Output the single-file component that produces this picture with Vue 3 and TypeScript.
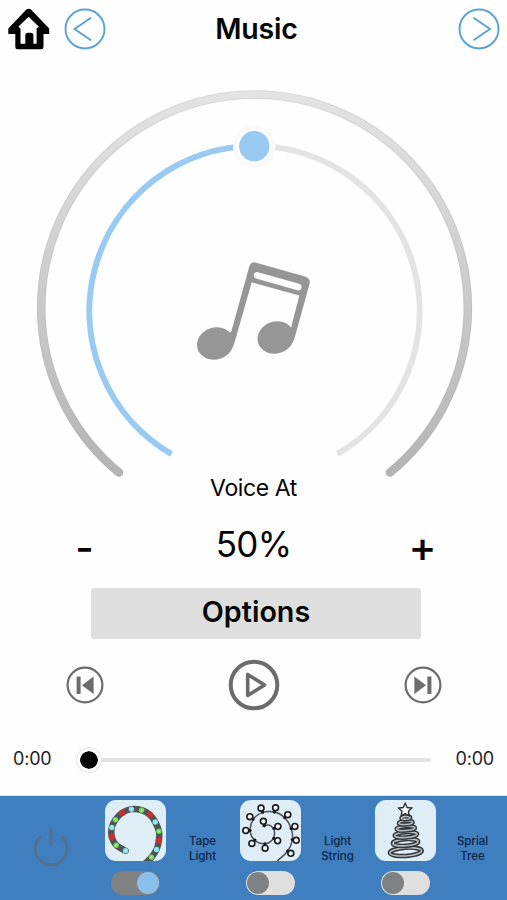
<script setup lang="ts">
import { ref } from 'vue'

type Point = [number, number]

interface Device {
  id: string
  label: [string, string]
  on: boolean
}

const volume = ref(50)
const devices = ref<Device[]>([
  { id: 'tape', label: ['Tape', 'Light'], on: true },
  { id: 'string', label: ['Light', 'String'], on: false },
  { id: 'tree', label: ['Sprial', 'Tree'], on: false },
])

function change(step: number): void {
  volume.value = Math.min(100, Math.max(0, volume.value + step))
}

/** Smooth curve through a list of points (Catmull-Rom to Bezier). */
function smooth(points: Point[]): string {
  let d = `M${points[0][0]} ${points[0][1]}`
  for (let i = 0; i < points.length - 1; i++) {
    const a = points[Math.max(0, i - 1)]
    const b = points[i]
    const c = points[i + 1]
    const e = points[Math.min(points.length - 1, i + 2)]
    d += `C${b[0] + (c[0] - a[0]) / 6} ${b[1] + (c[1] - a[1]) / 6} ${c[0] - (e[0] - b[0]) / 6} ${c[1] - (e[1] - b[1]) / 6} ${c[0]} ${c[1]}`
  }
  return d
}

const tapePoints: Point[] = [
  [20.3, 50], [11, 44.4], [6.7, 36.4], [6.7, 27], [10.3, 19.4], [16.7, 12.7], [26, 9],
  [36, 10], [44, 14.4], [49.4, 21.7], [53, 30.7], [53, 39.7], [50.7, 48.7], [45.7, 56.4], [39, 63],
]
const tapeColors = ['#7fe0ee', '#6fd84c', '#c8302c']
const tapeLights = tapePoints.slice(0, 14).map((p, i) => {
  const k = i < 7 ? i % 3 : [1, 2, 0][(i - 7) % 3]
  return { x: p[0], y: p[1], color: tapeColors[k], red: k === 2 }
})
const tapePath = smooth(tapePoints)

const wirePath = smooth([
  [22, 26], [28, 24.6], [32.5, 27.5], [34, 33], [32, 39], [24.7, 43], [14.7, 39.7], [10, 30.4], [13, 19], [22, 12.4],
  [34.7, 12], [44, 17.4], [50.4, 28], [51.4, 39.7], [46.7, 50.4], [36.7, 60],
])
const bulbs: { at: Point; base: Point }[] = [
  { at: [23, 21], base: [24, 25.5] },
  { at: [37.3, 26], base: [33.2, 28] },
  { at: [37, 40], base: [33, 37.6] },
  { at: [24.7, 47.4], base: [24.5, 43] },
  { at: [11.7, 42.7], base: [14.6, 39.3] },
  { at: [5.7, 30], base: [10, 30] },
  { at: [9.7, 16.4], base: [13, 19] },
  { at: [20.7, 8], base: [22.3, 12.2] },
  { at: [35, 7.7], base: [33.6, 12] },
  { at: [47, 14.4], base: [43.8, 17.5] },
  { at: [54, 26], base: [50, 28] },
  { at: [55.3, 39.7], base: [51.2, 39] },
  { at: [50, 52.4], base: [46.8, 50] },
]

const coils = [
  { x: 30.3, y: 51, rx: 15.7, ry: 4 },
  { x: 30, y: 41.8, rx: 12.5, ry: 3.2 },
  { x: 30.3, y: 34.3, rx: 11, ry: 2.6 },
  { x: 30.3, y: 28, rx: 9, ry: 2.1 },
  { x: 30.3, y: 22.4, rx: 6.8, ry: 1.7 },
  { x: 30.3, y: 17.6, rx: 4.3, ry: 1.3 },
]
</script>

<template>
  <main class="screen">
    <header class="top">
      <button class="plain home" aria-label="Home">
        <svg width="44" height="42" viewBox="7 7.500 44 42">
          <path d="M26.400 9.100Q28.700 7.200 31 9.100L49.200 28V33.500H43.500V46.500Q43.500 48.800 41.200 48.800H17.600Q15.300 48.800 15.300 46.500V33.500H8.300V28z" />
          <path d="M28.600 16.300 18.300 26.300 20.500 28V43.200H25.300V35Q25.300 32.300 28 32.300H30.700Q33.400 32.300 33.400 35V43.200H36.600V28L38.900 26.300z" fill="#fff" />
        </svg>
      </button>
      <button class="plain back" aria-label="Back">
        <svg width="42" height="42" viewBox="0 0 42 42">
          <circle cx="21" cy="21" r="19.500" class="ring" />
          <path d="M27 9.700 10.500 21 27 32.300" class="ring" />
        </svg>
      </button>
      <h1>Music</h1>
      <button class="plain next" aria-label="Next">
        <svg width="42" height="42" viewBox="0 0 42 42">
          <circle cx="21" cy="21" r="19.500" class="ring" />
          <path d="M15.500 9.700 32 21 15.500 32.300" class="ring" />
        </svg>
      </button>
    </header>

    <svg class="dial" width="507" height="422" viewBox="0 58 507 422">
      <defs>
        <linearGradient id="rim" gradientUnits="userSpaceOnUse" x1="0" y1="91" x2="0" y2="476">
          <stop offset="0" stop-color="#e4e4e4" />
          <stop offset="1" stop-color="#b4b4b4" />
        </linearGradient>
        <linearGradient id="rimEdge" gradientUnits="userSpaceOnUse" x1="0" y1="91" x2="0" y2="476">
          <stop offset="0" stop-color="#d6d6d6" />
          <stop offset="1" stop-color="#b0b0b0" />
        </linearGradient>
      </defs>
      <path d="M119 472.500A213.300 213.300 0 1 1 390 472.500" class="arc" stroke="url(#rimEdge)" stroke-width="8.600" />
      <path d="M119 472.500A213.300 213.300 0 1 1 390 472.500" class="arc" stroke="url(#rim)" stroke-width="6.500" />
      <path d="M254.300 146A165.200 165.200 0 0 1 337.500 454" class="arc butt" stroke="#e3e3e3" />
      <path d="M171.500 454A165.200 165.200 0 0 1 254.300 146" class="arc butt" stroke="#98caf2" />
      <circle cx="254.300" cy="146.300" r="21.300" fill="#f9f9f9" />
      <circle cx="254.300" cy="146.300" r="17.500" fill="#fff" />
      <circle cx="254.300" cy="146.300" r="15.200" fill="#98caf2" />
      <g fill="#969696">
        <path d="M255.300 262.500 305 276.400Q311 278.500 309.400 284.300L296 333Q293.500 345 285 350L281 337 291 328 299.300 295.500 251.700 282.300 235 341Q232 352 224 356.500L220 340 231.300 331.500 249 267.500Q250.500 261.500 255.300 262.500z" />
        <ellipse cx="215.300" cy="343.500" rx="18.500" ry="16" transform="rotate(-17 215.300 343.500)" />
        <ellipse cx="275.800" cy="337.500" rx="18.500" ry="16" transform="rotate(-17 275.800 337.500)" />
      </g>
      <path d="M257 275.300 298.300 287" stroke="#fff" stroke-width="6.500" stroke-linecap="round" />
    </svg>

    <p class="caption">Voice At</p>

    <section class="level">
      <button class="plain step minus" aria-label="Decrease" @click="change(-1)">-</button>
      <output>{{ volume }}%</output>
      <button class="plain step plus" aria-label="Increase" @click="change(1)">+</button>
    </section>

    <button class="plain options">Options</button>

    <section class="transport">
      <button class="plain" aria-label="Previous">
        <svg width="38" height="38" viewBox="0 0 38 38">
          <circle cx="19" cy="19" r="17.400" fill="none" stroke="#6c6c6c" stroke-width="2.200" />
          <path d="M10.600 10.500h4V28h-4zM27.600 10.500V28L16 19.200z" fill="#6c6c6c" />
        </svg>
      </button>
      <button class="plain" aria-label="Play">
        <svg width="52" height="52" viewBox="0 0 52 52">
          <circle cx="26" cy="26" r="23.300" fill="none" stroke="#6c6c6c" stroke-width="4" />
          <path d="M19.700 15.500v21L36.500 26z" fill="none" stroke="#6c6c6c" stroke-width="3.600" stroke-linejoin="round" />
        </svg>
      </button>
      <button class="plain" aria-label="Skip">
        <svg width="38" height="38" viewBox="0 0 38 38">
          <circle cx="19" cy="19" r="17.400" fill="none" stroke="#6c6c6c" stroke-width="2.200" />
          <path d="M23.400 10.500h4V28h-4zM10.400 10.500V28L22 19.200z" fill="#6c6c6c" />
        </svg>
      </button>
    </section>

    <section class="progress">
      <span>0:00</span>
      <div class="slider"><i class="thumb"></i><i class="track"></i></div>
      <span>0:00</span>
    </section>

    <footer class="bar">
      <button class="plain power" aria-label="Power">
        <svg width="38" height="42" viewBox="0 0 38 42">
          <path d="M8 10.200A16 16 0 1 0 30.200 10.200M19 2.800V18" fill="none" stroke="#566f8b" stroke-width="2.600" stroke-linecap="round" />
        </svg>
      </button>
      <div v-for="device in devices" :key="device.id" class="device">
        <div class="control">
          <svg class="picture" width="61" height="61" viewBox="0 0 60 60">
            <g v-if="device.id === 'tape'">
              <path :d="tapePath" fill="none" stroke="#505356" stroke-width="6.400" stroke-linecap="round" />
              <template v-for="(light, i) in tapeLights" :key="i">
                <circle :cx="light.x" :cy="light.y" :r="light.red ? 3.100 : 2.700" :fill="light.color" />
                <circle v-if="!light.red" :cx="light.x" :cy="light.y" r="1" fill="#d8fff0" opacity=".7" />
              </template>
            </g>
            <g v-else-if="device.id === 'string'">
              <path :d="wirePath" fill="none" stroke="#4b5157" stroke-width="1.500" />
              <template v-for="(bulb, i) in bulbs" :key="i">
                <path :d="`M${bulb.base[0]} ${bulb.base[1]}L${bulb.at[0]} ${bulb.at[1]}`" stroke="#15181b" stroke-width="2.800" stroke-linecap="round" />
                <circle :cx="bulb.at[0]" :cy="bulb.at[1]" r="2.900" fill="#f2f8fc" stroke="#1a1d20" stroke-width="1.600" />
              </template>
            </g>
            <g v-else fill="none">
              <path d="M27 16h6.500l3 14h-12z" fill="#5b5f63" />
              <g v-for="(coil, i) in coils" :key="i" :transform="`rotate(-4 ${coil.x} ${coil.y})`">
                <ellipse :cx="coil.x" :cy="coil.y" :rx="coil.rx" :ry="coil.ry" stroke="#34383c" stroke-width="4.400" />
                <ellipse :cx="coil.x" :cy="coil.y" :rx="coil.rx" :ry="coil.ry" stroke="#b9bec2" stroke-width="1.500" />
              </g>
              <path d="M29.700 3.200l1.900 4.200 4.600.5-3.400 3.100.9 4.500-4-2.200-4 2.200.9-4.500-3.400-3.100 4.600-.5z" fill="#fff" stroke="#2b2f33" stroke-width="1.300" />
            </g>
          </svg>
          <button class="plain switch" :class="{ on: device.on }" role="switch" :aria-checked="device.on" @click="device.on = !device.on"><i></i></button>
        </div>
        <p>{{ device.label[0] }}<br />{{ device.label[1] }}</p>
      </div>
    </footer>
  </main>
</template>

<style>
body {
  margin: 0;
  background: #fefefe;
}
</style>

<style scoped>
.screen {
  width: 507px;
  height: 900px;
  display: flex;
  flex-direction: column;
  overflow: hidden;
  background: #fefefe;
  color: #050505;
  font-family: Inter, "Liberation Sans", sans-serif;
}
.plain {
  border: 0;
  padding: 0;
  background: none;
  color: inherit;
  font-family: inherit;
}
svg {
  display: block;
}
.top {
  height: 58px;
  box-sizing: border-box;
  padding: 0 7px;
  display: grid;
  grid-template-columns: 57px 42px 1fr 93px;
  align-items: center;
}
.top .next {
  justify-self: end;
}
.ring {
  fill: none;
  stroke: #5aa2d2;
  stroke-width: 1.900;
}
h1 {
  margin: 0;
  text-align: center;
  font-size: 28.500px;
  font-weight: 600;
  letter-spacing: -.2px;
  line-height: 58px;
}
.arc {
  fill: none;
  stroke-linecap: round;
}
.butt {
  stroke-width: 6px;
  stroke-linecap: butt;
}
.dial {
  flex: none;
}
.caption {
  margin: 0;
  height: 32px;
  line-height: 16px;
  text-align: center;
  font-size: 23px;
  letter-spacing: -.4px;
}
.level {
  height: 76px;
  padding: 0 56px;
  display: grid;
  grid-template-columns: 57px 1fr 57px;
  text-align: center;
}
.level output {
  font-size: 35px;
  letter-spacing: -.7px;
  line-height: 64px;
}
.step {
  height: 76px;
  font-weight: 500;
  line-height: 60px;
}
.plus {
  padding-bottom: 6px;
  font-size: 42px;
}
.minus {
  padding-bottom: 5px;
  font-size: 40px;
}
.options {
  width: 330px;
  height: 51px;
  margin-left: 91px;
  flex: none;
  border-radius: 3px;
  background: #dedede;
  font-size: 28.700px;
  font-weight: 600;
  line-height: 48px;
  padding-bottom: 3px;
}
.transport {
  height: 91px;
  padding: 0 65px 0 66px;
  display: flex;
  align-items: center;
  justify-content: space-between;
}
.progress {
  height: 65px;
  padding: 0 13px;
  flex: none;
  display: grid;
  grid-template-columns: 62px 356px 1fr;
  color: #222;
  font-size: 18px;
  letter-spacing: -.2px;
}
.progress span {
  line-height: 58px;
}
.progress span:last-child {
  text-align: right;
}
.slider {
  height: 60px;
  display: flex;
  align-items: center;
}
.thumb {
  width: 18px;
  height: 18px;
  margin-left: 1.500px;
  border: 3px solid #fff;
  border-radius: 50%;
  background: #000;
  background-clip: padding-box;
  box-shadow: 0 0 0 1px #e5e5e5;
}
.track {
  flex: 1;
  height: 4px;
  border-radius: 0 2px 2px 0;
  background: #e2e2e2;
}
.bar {
  flex: 1;
  border-top: 1px solid #cfe8f4;
  background: #3f7fbf;
  display: grid;
  grid-template-columns: 102px repeat(3, 135px);
}
.power {
  margin-top: 31px;
  justify-self: center;
  align-self: start;
}
.device {
  padding-top: 4px;
  display: grid;
  grid-template-columns: 67px 67px;
}
.control {
  display: flex;
  flex-direction: column;
  align-items: center;
  gap: 10px;
}
.picture {
  border-radius: 11px;
  background: #dfedf7;
}
.switch {
  width: 49px;
  height: 24px;
  padding: 1px;
  display: flex;
  border-radius: 12px;
  background: #dfdfdf;
}
.switch i {
  width: 22px;
  height: 22px;
  border-radius: 50%;
  background: #7f8182;
}
.switch.on {
  justify-content: flex-end;
  background: #7f8182;
}
.switch.on i {
  background: #8dbfec;
}
.device p {
  margin: 34px 0 0;
  text-align: center;
  font-size: 11.500px;
  font-weight: 500;
  letter-spacing: -.05px;
  line-height: 14.500px;
  color: #0d2444;
}
</style>
